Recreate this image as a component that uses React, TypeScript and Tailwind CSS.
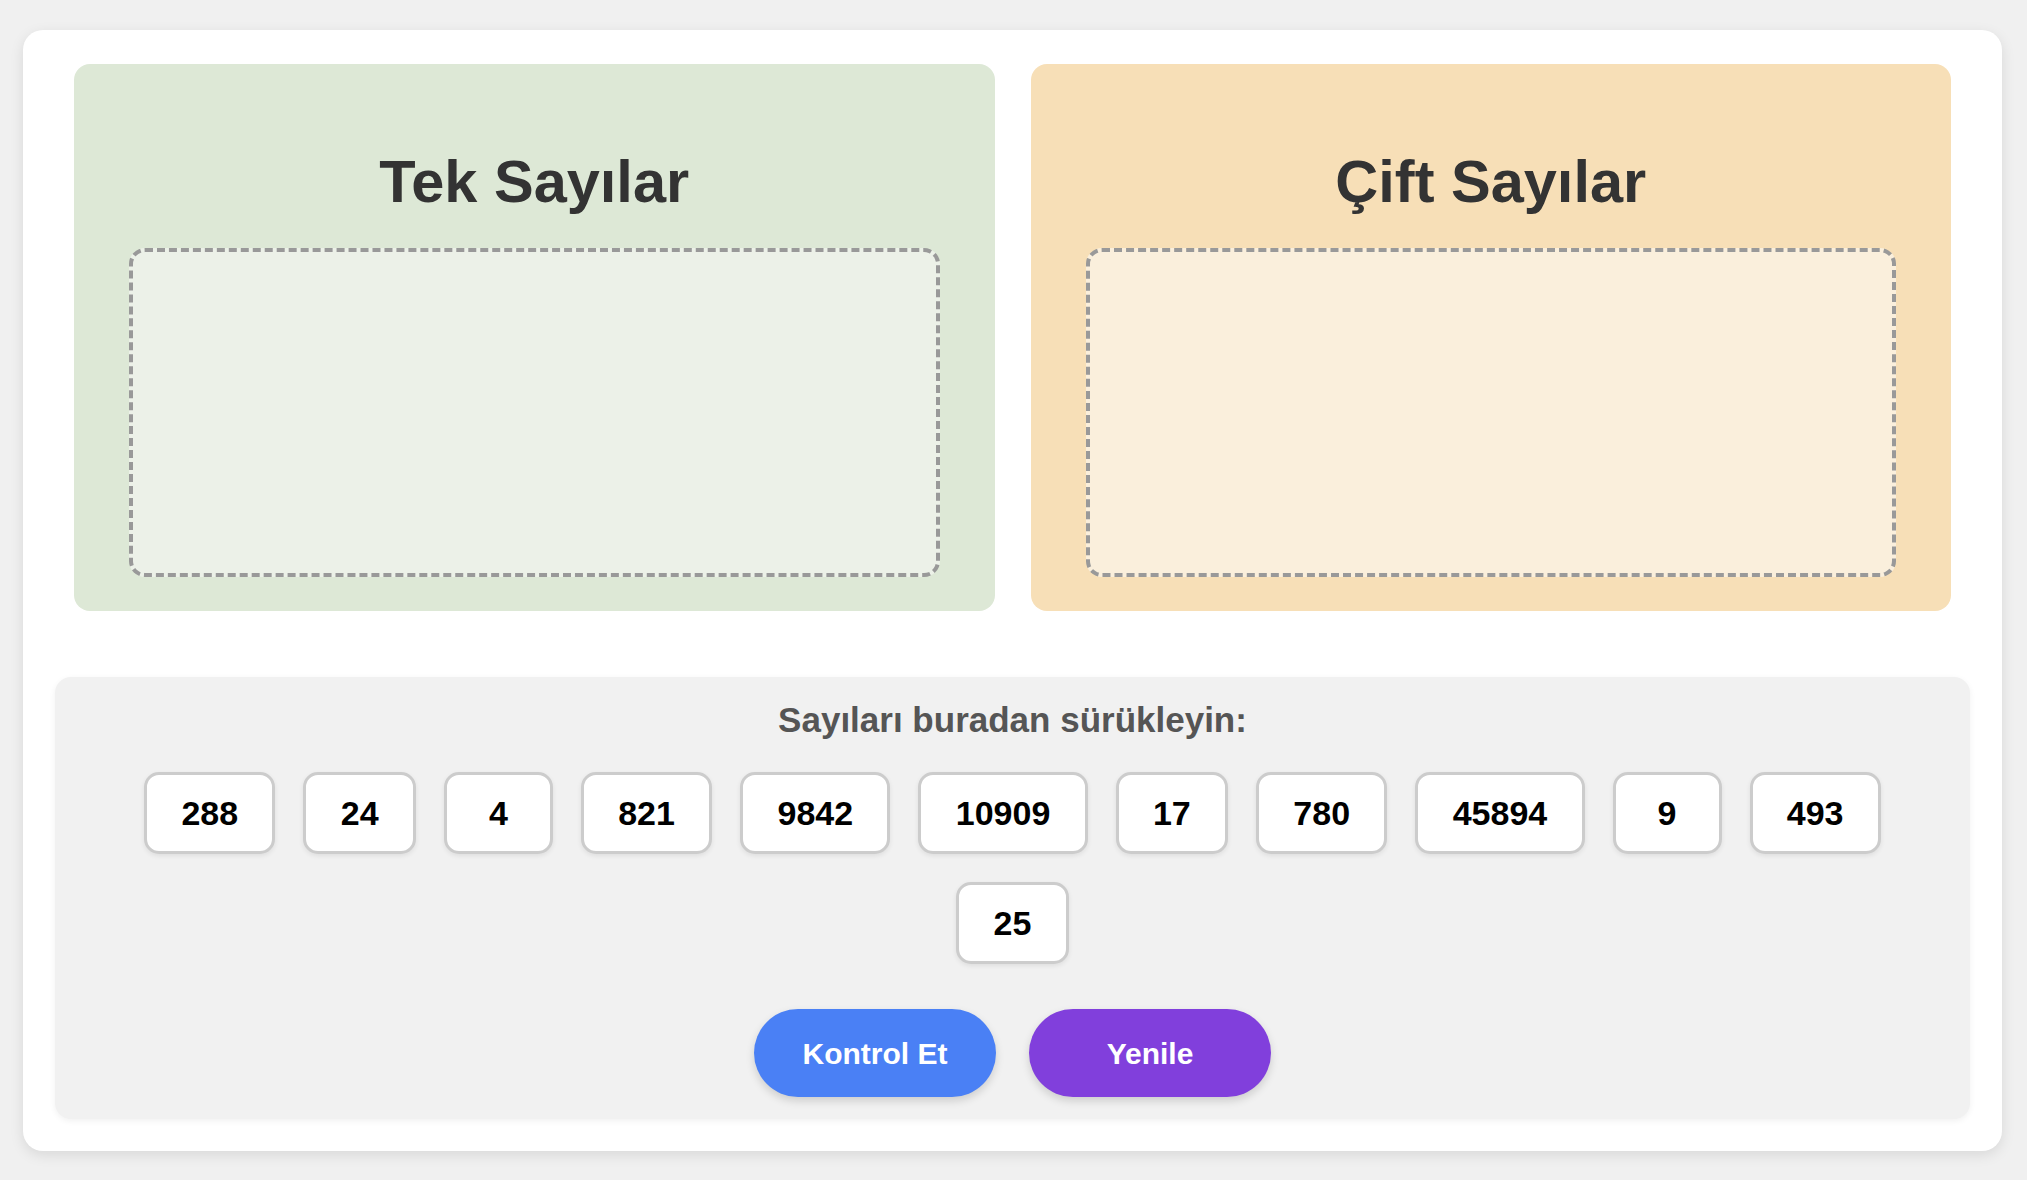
const numbers = [288, 24, 4, 821, 9842, 10909, 17, 780, 45894, 9, 493, 25];

function DropZone({ title, panel, inner }: { title: string; panel: string; inner: string }) {
  return (
    <div className={`rounded-2xl px-[55px] pt-[83px] pb-[34px] ${panel}`}>
      <h2 className="text-center text-[59.5px] leading-[69px] font-bold text-[#333]">{title}</h2>
      <div className={`mt-[32px] h-[329px] rounded-[16px] border-4 border-dashed border-[#999] ${inner}`}></div>
    </div>
  );
}

export default function App() {
  return (
    <div
      className="min-h-screen bg-[#f0f0f0] pl-[23px] pr-[25px] pt-[30px] pb-[28px]"
      style={{ fontFamily: '"Liberation Sans", Arial, sans-serif' }}
    >
      <div className="rounded-[20px] bg-white px-[32px] pt-[34px] pb-[32px] shadow-[0_4px_14px_rgba(0,0,0,0.1)]">
        <div className="grid grid-cols-2 gap-[36px] px-[19px]">
          <DropZone title="Tek Sayılar" panel="bg-[#dde8d6]" inner="bg-[#ecf1e8]" />
          <DropZone title="Çift Sayılar" panel="bg-[#f7dfb7]" inner="bg-[#faefdc]" />
        </div>

        <div className="mt-[66px] rounded-2xl bg-[#f1f1f1] px-[23px] pt-[23px] pb-[22px] shadow-[0_2px_6px_rgba(0,0,0,0.06)]">
          <p className="text-center text-[35px] leading-[40px] font-bold text-[#555]">Sayıları buradan sürükleyin:</p>
          <div className="mx-auto mt-[32px] flex max-w-[1810px] flex-wrap justify-center gap-[28px]">
            {numbers.map((n) => (
              <div
                key={n}
                className="flex h-[82px] min-w-[109px] items-center justify-center rounded-[15px] border-[3px] border-[#ccc] bg-white px-[34.3px] text-[34px] leading-[39px] font-bold text-black shadow-[0_2px_5px_rgba(0,0,0,0.08)]"
              >
                {n}
              </div>
            ))}
          </div>
          <div className="mt-[45px] flex justify-center gap-[33px]">
            <button className="h-[88px] w-[242px] rounded-full bg-[#4a80f5] text-[30px] font-bold text-white shadow-[0_4px_8px_rgba(0,0,0,0.15)]">
              Kontrol Et
            </button>
            <button className="h-[88px] w-[242px] rounded-full bg-[#813fdc] text-[30px] font-bold text-white shadow-[0_4px_8px_rgba(0,0,0,0.15)]">
              Yenile
            </button>
          </div>
        </div>
      </div>
    </div>
  );
}
